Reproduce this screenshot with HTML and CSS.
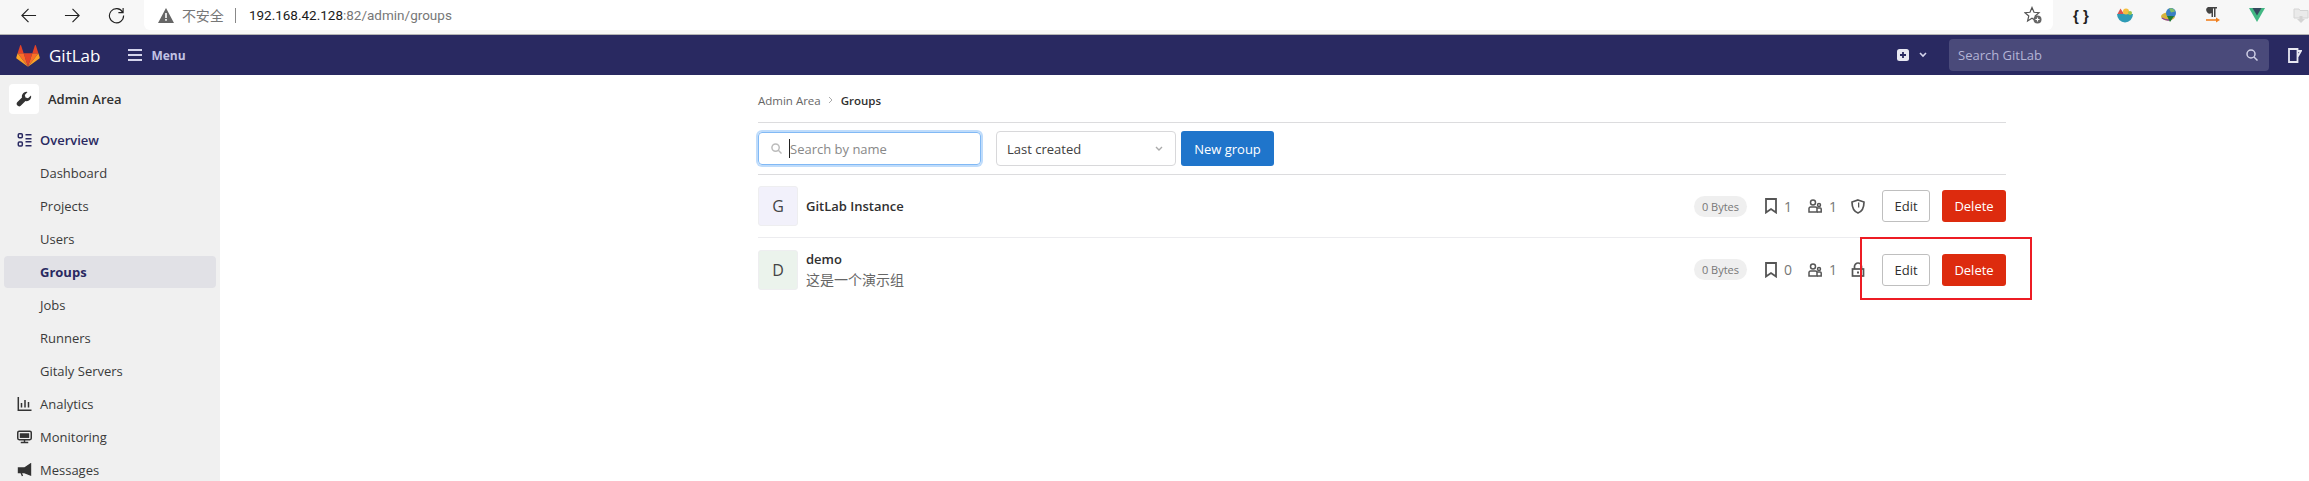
FILE: index.html
```html
<!DOCTYPE html>
<html lang="zh-CN">
<head>
  <meta charset="UTF-8" />
  <title>Groups · Admin Area · GitLab</title>
  <link rel="stylesheet" href="styles.css">
</head>
<body>

  <div class="browser-bar">
    <div class="browser-nav">
      <svg class="nav-ico" viewBox="0 0 18 18"><path d="M17 9H2M9 2 2 9l7 7"/></svg>
      <svg class="nav-ico" viewBox="0 0 18 18"><path d="M1 9h15M9 2l7 7-7 7"/></svg>
      <svg class="nav-ico" viewBox="0 0 18 18"><path d="M15.5 5.5A7.5 7.5 0 1 0 16.5 9M16 1v5h-5"/></svg>
    </div>
    <div class="address">
      <svg class="warn" viewBox="0 0 16 15"><path d="M8 0 16 15H0z" fill="#666"/><path d="M7.2 5h1.6v5H7.2zM7.2 11h1.6v1.7H7.2z" fill="#fff"/></svg>
      <span class="insecure">不安全</span>
      <span class="addr-sep"></span>
      <span class="url"><span class="url-host">192.168.42.128</span>:82/admin/groups</span>
      <svg class="star" viewBox="0 0 18 18"><path d="M8 1.5 10 6.300l5 .4-3.800 3.300 1.200 4.900L8 12.300 3.600 14.900l1.200-4.900L1 6.700l5-.4z" fill="none" stroke="#555" stroke-width="1.200"/><circle cx="13.500" cy="13.500" r="4" fill="#666"/><path d="M11.500 13.500h4M13.500 11.500v4" stroke="#fff" stroke-width="1.200"/></svg>
    </div>
    <div class="extensions">
      <span class="ext-braces">{ }</span>
      <svg class="ext" viewBox="0 0 16 16"><path d="M0 7h16a8 8.500 0 0 1-16 0z" fill="#2f9bb5"/><path d="M.5 7 3.500 1.500 7 7z" fill="#d9534f"/><circle cx="9" cy="4.500" r="3" fill="#f4c03e"/><circle cx="13" cy="6" r="2" fill="#9bc34a"/></svg>
      <svg class="ext" viewBox="0 0 16 16"><ellipse cx="7" cy="9.500" rx="7" ry="4" fill="#d7b33c"/><path d="M1 11c3 2 6 2.500 9 1.500" fill="none" stroke="#8a3fa0" stroke-width="1.500"/><circle cx="10" cy="6" r="5" fill="#3a7fc4"/><path d="M8 1.500a5 5 0 0 1 6 3l-4 1z" fill="#7fbf6a"/><path d="M6 9h7l-4 6z" fill="#1f7a33"/></svg>
      <svg class="ext" viewBox="0 0 14 16"><path d="M2 0h9v1.500H9.500V10H8V1.500H7V10H5.500V6A3 3 0 0 1 2 0z" fill="#444"/><path d="M0 13h11" stroke="#f08020" stroke-width="1.600"/><path d="m10 10.500 4 2.500-4 2.500z" fill="#f08020"/></svg>
      <svg class="ext" viewBox="0 0 16 14"><path d="M0 0h16L8 14z" fill="#42b883"/><path d="M3.500 0h9L8 7.500z" fill="#35495e"/></svg>
      <svg class="ext ext-faint" viewBox="0 0 16 16"><path d="M1 2h5l1 1.500h8V11H1z" fill="#e8e8e8" stroke="#ccc"/><path d="M6.500 9h3v3H12l-4 4-4-4h2.500z" fill="#ccc"/></svg>
    </div>
  </div>

  <header class="navbar">
    <svg class="tanuki" viewBox="0 0 36 35">
      <path d="M18 34.500 24.600 14.200H11.400z" fill="#e24329"/>
      <path d="M18 34.500 11.400 14.200H2.200z" fill="#fc6d26"/>
      <path d="M2.200 14.200.2 20.400a1.400 1.400 0 0 0 .5 1.500L18 34.500z" fill="#fca326"/>
      <path d="M2.200 14.200h9.200L7.400 2a.7.7 0 0 0-1.300 0z" fill="#e24329"/>
      <path d="M18 34.500 24.600 14.200h9.200z" fill="#fc6d26"/>
      <path d="M33.800 14.200l2 6.200a1.400 1.400 0 0 1-.5 1.500L18 34.500z" fill="#fca326"/>
      <path d="M33.800 14.200h-9.200L28.600 2a.7.7 0 0 1 1.300 0z" fill="#e24329"/>
    </svg>
    <span class="brand">GitLab</span>
    <span class="menu-btn">
      <svg class="burger" viewBox="0 0 14 12"><path d="M0 1h14M0 6h14M0 11h14"/></svg>
      Menu
    </span>
    <span class="nav-spacer"></span>
    <svg class="plus" viewBox="0 0 12 12"><rect width="12" height="12" rx="2.500" fill="#e8e8f2"/><path d="M6 3v6M3 6h6" stroke="#292961" stroke-width="1.800"/></svg>
    <svg class="chev" viewBox="0 0 8 6"><path d="m1 1 3 3 3-3"/></svg>
    <div class="nav-search">
      <span>Search GitLab</span>
      <svg class="mag" viewBox="0 0 12 12"><circle cx="5" cy="5" r="4"/><path d="m8 8 3.500 3.500"/></svg>
    </div>
    <svg class="todo" viewBox="0 0 14 15"><path d="M1 1h8.500v13H1zM9.500 3h3.500L9.500 9" /></svg>
  </header>

  <div class="page">
    <aside class="sidebar">
      <div class="admin-head">
        <span class="admin-ico">
          <svg viewBox="0 0 16 16"><path d="M15 4.500 12 7.200 9.500 6.500 8.800 4 11.500 1A4.500 4.500 0 0 0 6 6.500L1.200 11.300a2.500 2.500 0 0 0 3.500 3.500L9.500 10A4.500 4.500 0 0 0 15 4.500z" fill="#333"/></svg>
        </span>
        <span>Admin Area</span>
      </div>
      <ul class="side-nav">
        <li class="side-item side-title">
          <svg class="side-ico" viewBox="0 0 14 14"><g fill="none" stroke="#292961" stroke-width="1.500"><rect x=".8" y=".8" width="4" height="4" rx="1"/><rect x=".8" y="9" width="4" height="4" rx="1"/></g><path d="M8 1h6v1.500H8zM8 5h6v1.500H8zM8 8h6v1.500H8zM8 12h6v1.500H8z" fill="#292961"/></svg>
          Overview
        </li>
        <li class="side-item side-sub">Dashboard</li>
        <li class="side-item side-sub">Projects</li>
        <li class="side-item side-sub">Users</li>
        <li class="side-item side-sub active">Groups</li>
        <li class="side-item side-sub">Jobs</li>
        <li class="side-item side-sub">Runners</li>
        <li class="side-item side-sub">Gitaly Servers</li>
        <li class="side-item">
          <svg class="side-ico" viewBox="0 0 14 14"><path d="M.8 0v13.200H14M4 6v4.500M7.500 3v7.500M11 5v5.500" fill="none" stroke="#333" stroke-width="1.500"/></svg>
          Analytics
        </li>
        <li class="side-item">
          <svg class="side-ico" viewBox="0 0 16 14"><rect x=".8" y=".8" width="14.400" height="9" rx="1.500" fill="none" stroke="#333" stroke-width="1.600"/><path d="M3 3h10v5H3z" fill="#333"/><path d="M4 12.800h8M8 10v3" stroke="#333" stroke-width="1.500"/></svg>
          Monitoring
        </li>
        <li class="side-item">
          <svg class="side-ico" viewBox="0 0 14 14"><path d="M13 1v11L7 9.500H5V5h2zM1 5h4v4.500H1zM3.500 9.500 5 13" fill="#333" stroke="#333" stroke-width="1.400"/></svg>
          Messages
        </li>
      </ul>
    </aside>

    <main class="content">
      <div class="crumbs">
        <span class="crumb-link">Admin Area</span>
        <svg class="crumb-sep" viewBox="0 0 6 8"><path d="m1 1 3 3-3 3"/></svg>
        <span class="crumb-now">Groups</span>
      </div>

      <div class="filter-row">
        <div class="search-box">
          <svg class="search-ico" viewBox="0 0 12 12"><circle cx="5" cy="5" r="4"/><path d="m8 8 3.500 3.500"/></svg>
          <span class="caret"></span>
          <span class="placeholder">Search by name</span>
        </div>
        <div class="sort-box">
          <span>Last created</span>
          <svg class="sort-chev" viewBox="0 0 8 6"><path d="m1 1 3 3 3-3"/></svg>
        </div>
        <span class="btn btn-blue">New group</span>
      </div>

      <ul class="group-list">
        <li class="group-row">
          <span class="avatar avatar-g">G</span>
          <div class="group-text">
            <div class="group-name">GitLab Instance</div>
          </div>
          <div class="group-stats">
            <span class="size-badge">0 Bytes</span>
            <span class="stat">
              <svg class="stat-ico" viewBox="0 0 12 16"><path d="M1 1h10v13.500L6 11 1 14.500z"/></svg>
              <span class="stat-num">1</span>
            </span>
            <span class="stat">
              <svg class="stat-ico people" viewBox="0 0 14 14"><circle cx="5" cy="3.500" r="2.500"/><path d="M1 13V9.500a1.500 1.500 0 0 1 1.500-1.500h5A1.500 1.500 0 0 1 9 9.500V13z"/><circle cx="11" cy="6" r="1.500"/><path d="M9 13h4.200V10a1 1 0 0 0-1-1H9"/></svg>
              <span class="stat-num">1</span>
            </span>
            <svg class="vis-ico" viewBox="0 0 14 15"><path d="M7 1 13 3c0 6-2 9.500-6 11C3 12.500 1 9 1 3z" fill="none" stroke="#555" stroke-width="1.700"/><path d="M7 3.500h1.300v5H7z" fill="#555"/></svg>
          </div>
          <span class="btn btn-edit">Edit</span>
          <span class="btn btn-red">Delete</span>
        </li>
        <li class="group-row">
          <span class="avatar avatar-d">D</span>
          <div class="group-text">
            <div class="group-name">demo</div>
            <div class="group-desc">这是一个演示组</div>
          </div>
          <div class="group-stats">
            <span class="size-badge">0 Bytes</span>
            <span class="stat">
              <svg class="stat-ico" viewBox="0 0 12 16"><path d="M1 1h10v13.500L6 11 1 14.500z"/></svg>
              <span class="stat-num">0</span>
            </span>
            <span class="stat">
              <svg class="stat-ico people" viewBox="0 0 14 14"><circle cx="5" cy="3.500" r="2.500"/><path d="M1 13V9.500a1.500 1.500 0 0 1 1.500-1.500h5A1.500 1.500 0 0 1 9 9.500V13z"/><circle cx="11" cy="6" r="1.500"/><path d="M9 13h4.200V10a1 1 0 0 0-1-1H9"/></svg>
              <span class="stat-num">1</span>
            </span>
            <svg class="vis-ico" viewBox="0 0 14 15"><path d="M3.500 7V4.500a3.500 3.500 0 0 1 7 0V7" fill="none" stroke="#555" stroke-width="1.700"/><rect x="1.500" y="7" width="11" height="7" fill="none" stroke="#555" stroke-width="1.700"/><rect x="6" y="9.500" width="2" height="2" fill="#555"/></svg>
          </div>
          <span class="btn btn-edit">Edit</span>
          <span class="btn btn-red">Delete</span>
        </li>
      </ul>

      <div class="red-mark"></div>
    </main>
  </div>

</body>
</html>
```

FILE: styles.css
```css
:root {
  --navy: #292961;
  --sidebar-bg: #f0f0f0;
  --line: #dcdcde;
  --text: #303030;
  --muted: #666;
}

* {
  box-sizing: border-box;
}

body {
  margin: 0;
  height: 481px;
  overflow: hidden;
  background-color: #fff;
  color: var(--text);
  font-family: "Open Sans", "Noto Sans CJK SC", sans-serif;
  font-size: 13px;
}

ul {
  list-style: none;
  margin: 0;
  padding: 0;
}

/* browser chrome */

.browser-bar {
  display: flex;
  height: 35px;
  background-color: #f7f7f7;
  border-bottom: 1px solid #b4b4b4;
}

.browser-nav {
  display: flex;
  align-items: center;
  gap: 27px;
  width: 144px;
  height: 30px;
  padding-left: 20px;
}

.nav-ico {
  width: 17px;
  height: 17px;
  fill: none;
  stroke: #222;
  stroke-width: 1.200;
}

.address {
  display: flex;
  align-items: center;
  width: 1911px;
  height: 30px;
  padding: 0 11px 0 14px;
  background-color: #fff;
  border-radius: 0 0 6px 6px;
}

.warn {
  width: 16px;
  height: 15px;
}

.insecure {
  margin-left: 8px;
  color: #777;
  font-family: "Noto Sans CJK SC", sans-serif;
  font-size: 14px;
}

.addr-sep {
  width: 1px;
  height: 15px;
  margin: 0 13px 0 11px;
  background-color: #888;
}

.url {
  flex: 1;
  color: #777;
  font-family: Roboto, sans-serif;
  font-size: 13.500px;
}

.url-host {
  color: #1a1a1a;
}

.star {
  width: 18px;
  height: 18px;
}

.extensions {
  display: flex;
  align-items: center;
  gap: 28px;
  height: 30px;
  padding-left: 20px;
}

.ext-braces {
  width: 16px;
  color: #222;
  font-family: "Liberation Sans", sans-serif;
  font-size: 15px;
  font-weight: 700;
  white-space: nowrap;
}

.ext {
  flex: none;
  width: 16px;
  height: 16px;
}

.ext-faint {
  opacity: 0.8;
}

/* gitlab top bar */

.navbar {
  display: flex;
  align-items: center;
  height: 40px;
  padding-left: 16px;
  background-color: var(--navy);
}

.tanuki {
  width: 24px;
  height: 23px;
}

.brand {
  margin-left: 9px;
  color: #fff;
  font-size: 17px;
}

.menu-btn {
  display: flex;
  align-items: center;
  gap: 9px;
  margin-left: 28px;
  color: #c2c2e4;
  font-size: 12px;
  font-weight: 700;
}

.burger {
  width: 14px;
  height: 12px;
  fill: none;
  stroke: #d5d5ec;
  stroke-width: 2;
}

.nav-spacer {
  flex: 1;
}

.plus {
  width: 12px;
  height: 12px;
}

.chev {
  width: 8px;
  height: 6px;
  margin: 0 22px 0 10px;
  fill: none;
  stroke: #d5d5ec;
  stroke-width: 1.600;
}

.nav-search {
  display: flex;
  align-items: center;
  justify-content: space-between;
  width: 320px;
  height: 32px;
  padding: 0 11px 0 9px;
  background-color: #4a4a7a;
  border-radius: 4px;
  color: #b4b4d6;
}

.mag {
  width: 12px;
  height: 12px;
  fill: none;
  stroke: #d0d0e6;
  stroke-width: 1.500;
}

.todo {
  width: 14px;
  height: 15px;
  margin: 0 7px 0 19px;
  fill: none;
  stroke: #e8e8f2;
  stroke-width: 1.800;
}

/* sidebar */

.page {
  display: flex;
  height: 406px;
  overflow: hidden;
}

.sidebar {
  flex: none;
  width: 220px;
  padding: 9px 4px 0;
  background-color: var(--sidebar-bg);
}

.admin-head {
  display: flex;
  align-items: center;
  gap: 9px;
  height: 30px;
  margin: 0 0 10px 5px;
  font-weight: 600;
}

.admin-ico {
  display: flex;
  align-items: center;
  justify-content: center;
  width: 30px;
  height: 30px;
  background-color: #fff;
  border-radius: 4px;
}

.admin-ico svg {
  width: 16px;
  height: 16px;
}

.side-item {
  display: flex;
  align-items: center;
  height: 32px;
  margin-bottom: 1px;
  padding-left: 13px;
  border-radius: 4px;
  color: #3a3a3a;
}

.side-title {
  color: var(--navy);
  font-weight: 600;
}

.side-sub {
  padding-left: 36px;
}

.side-ico {
  flex: none;
  width: 15px;
  height: 14px;
  margin-right: 8px;
}

.active {
  background-color: #e1e1e6;
  color: var(--navy);
  font-weight: 700;
}

/* main content */

.content {
  position: relative;
  flex: none;
  width: 1248px;
  margin-left: 538px;
}

.crumbs {
  display: flex;
  align-items: center;
  gap: 7px;
  height: 48px;
  padding-top: 3px;
  border-bottom: 1px solid var(--line);
  font-size: 11.500px;
}

.crumb-link {
  color: var(--muted);
}

.crumb-sep {
  width: 6px;
  height: 8px;
  fill: none;
  stroke: #aaa;
}

.crumb-now {
  font-weight: 600;
}

.filter-row {
  display: flex;
  align-items: center;
  height: 52px;
  border-bottom: 1px solid var(--line);
}

.search-box {
  display: flex;
  align-items: center;
  width: 223px;
  height: 33px;
  padding-left: 12px;
  border: 1px solid #81b9f5;
  border-radius: 4px;
  box-shadow: 0 0 0 2px #bfdcfb;
}

.search-ico {
  width: 11px;
  height: 11px;
  fill: none;
  stroke: #bbb;
  stroke-width: 1.600;
}

.caret {
  width: 1px;
  height: 19px;
  margin-left: 7px;
  background-color: #222;
}

.placeholder {
  color: #888;
}

.sort-box {
  display: flex;
  align-items: center;
  justify-content: space-between;
  width: 180px;
  height: 35px;
  margin-left: 15px;
  padding: 0 12px 0 10px;
  border: 1px solid #d8d8da;
  border-radius: 4px;
  color: #404040;
}

.sort-chev {
  width: 8px;
  height: 6px;
  fill: none;
  stroke: #aaa;
  stroke-width: 1.400;
}

.btn {
  display: flex;
  flex: none;
  align-items: center;
  justify-content: center;
  height: 32px;
  border-radius: 3px;
}

.btn-blue {
  width: 93px;
  height: 35px;
  margin-left: 5px;
  background-color: #1f75cb;
  color: #fff;
}

.btn-edit {
  width: 48px;
  border: 1px solid #bfbfbf;
  color: #303030;
}

.btn-red {
  width: 64px;
  margin-left: 12px;
  background-color: #dd2b0e;
  color: #fff;
}

.group-row {
  display: flex;
  align-items: center;
  height: 63px;
  border-bottom: 1px solid #ececef;
}

.group-row:last-child {
  border-bottom: none;
}

.avatar {
  display: flex;
  flex: none;
  align-items: center;
  justify-content: center;
  width: 40px;
  height: 40px;
  border: 1px solid #eeeef0;
  border-radius: 3px;
  color: #444;
  font-size: 16px;
}

.avatar-g {
  background-color: #f2f1fb;
}

.avatar-d {
  background-color: #ebf3ec;
}

.group-text {
  flex: 1;
  margin-left: 8px;
}

.group-name {
  font-weight: 600;
  line-height: 20px;
}

.group-desc {
  margin-top: 1px;
  color: #666;
  font-size: 14px;
  line-height: 20px;
}

.group-stats {
  display: flex;
  align-items: center;
  width: 188px;
}

.size-badge {
  display: flex;
  align-items: center;
  justify-content: center;
  width: 53px;
  height: 21px;
  background-color: #efefef;
  border-radius: 11px;
  color: #777;
  font-size: 11px;
}

.stat {
  display: flex;
  align-items: center;
  gap: 7px;
  width: 43px;
  color: #777;
  font-size: 14px;
}

.size-badge + .stat {
  margin-left: 18px;
}

.stat-ico {
  flex: none;
  width: 12px;
  height: 16px;
  fill: none;
  stroke: #555;
  stroke-width: 1.800;
}

.people {
  width: 14px;
  height: 14px;
  stroke-width: 1.500;
}

.vis-ico {
  width: 14px;
  height: 15px;
}

.red-mark {
  position: absolute;
  left: 1102px;
  top: 162px;
  width: 172px;
  height: 63px;
  border: 2px solid #ed1c24;
}
```
